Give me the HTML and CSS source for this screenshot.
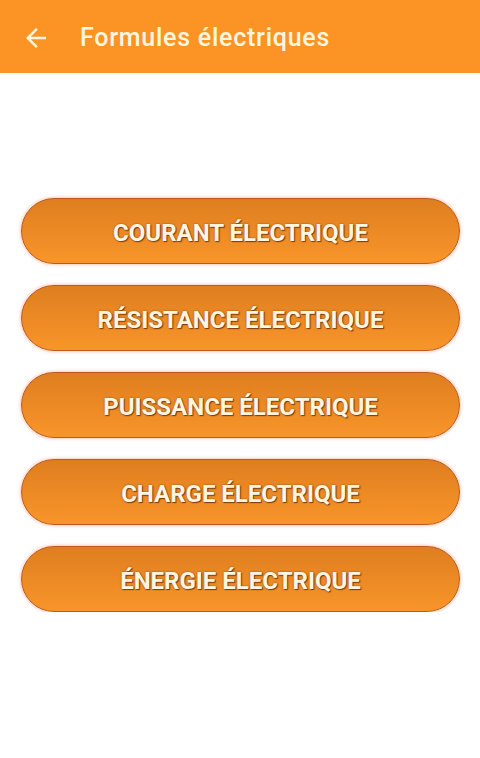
FILE: index.html
```html
<!DOCTYPE html>
<html lang="fr">
<head>
<meta charset="utf-8">
<title>Formules électriques</title>
<link rel="stylesheet" href="styles.css">
</head>
<body>
<header class="appbar">
  <svg class="back" viewBox="4 4 16 16" width="20" height="20" aria-hidden="true">
    <path d="M20 11H7.83l5.59-5.59L12 4l-8 8 8 8 1.41-1.41L7.83 13H20v-2z" fill="#fff6e0"/>
  </svg>
  <h1 class="title">Formules électriques</h1>
</header>
<main class="menu">
  <button class="btn">COURANT ÉLECTRIQUE</button>
  <button class="btn">RÉSISTANCE ÉLECTRIQUE</button>
  <button class="btn">PUISSANCE ÉLECTRIQUE</button>
  <button class="btn">CHARGE ÉLECTRIQUE</button>
  <button class="btn">ÉNERGIE ÉLECTRIQUE</button>
</main>
</body>
</html>
```
FILE: styles.css
```css
html, body {
  margin: 0;
  padding: 0;
  background: #ffffff;
  font-family: Roboto, "Liberation Sans", sans-serif;
}
.appbar {
  height: 73px;
  background: #fb9425;
  display: flex;
  align-items: center;
  padding-left: 26px;
  padding-top: 2px;
  box-sizing: border-box;
}
.back {
  display: block;
  flex: none;
}
.title {
  margin: 0 0 0 34px;
  font-size: 25px;
  font-weight: 500;
  color: #fff6e0;
  letter-spacing: 0.75px;
}
.menu {
  display: flex;
  flex-direction: column;
  gap: 21px;
  padding: 125px 20px 0 21px;
}
.btn {
  height: 66px;
  width: 100%;
  border-radius: 33px;
  border: 1.5px solid #bf5a1c;
  background: linear-gradient(#df7e1f, #f8952a);
  box-shadow: 0 0 3px 1px rgba(255, 150, 120, 0.5);
  font-family: Roboto, "Liberation Sans", sans-serif;
  font-weight: 700;
  font-size: 24px;
  color: #fff5e0;
  text-shadow: 1px 1px 1px #7a3e10, 0 0 2px rgba(90, 40, 5, 0.6);
  padding: 3px 0 0;
  cursor: pointer;
}
```
